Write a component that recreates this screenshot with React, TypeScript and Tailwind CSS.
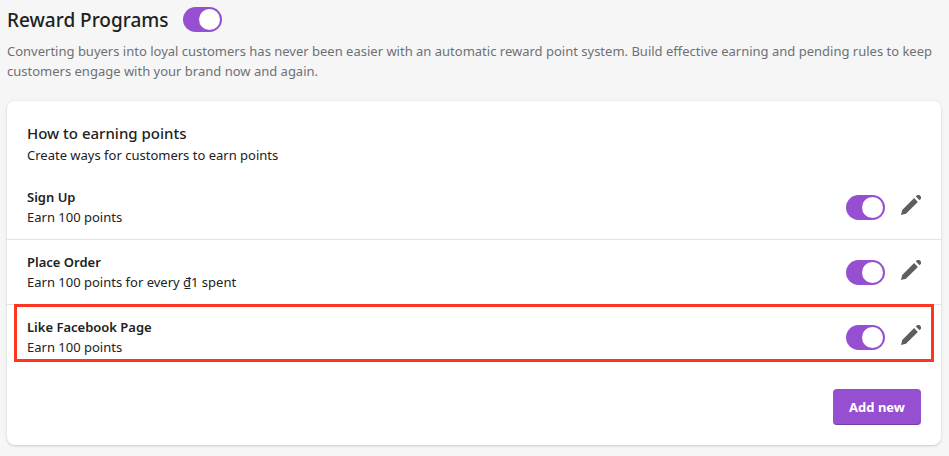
import { useState } from 'react';

type Program = {
  id: string;
  title: string;
  description: string;
  highlighted?: boolean;
};

const programs: Program[] = [
  { id: 'sign-up', title: 'Sign Up', description: 'Earn 100 points' },
  { id: 'place-order', title: 'Place Order', description: 'Earn 100 points for every ₫1 spent' },
  { id: 'like-facebook', title: 'Like Facebook Page', description: 'Earn 100 points', highlighted: true },
];

function Toggle({ label }: { label: string }) {
  const [checked, setChecked] = useState(true);

  return (
    <label className="relative block h-[25px] w-[39px] shrink-0 cursor-pointer">
      <input
        type="checkbox"
        role="switch"
        aria-label={label}
        checked={checked}
        onChange={(e) => setChecked(e.target.checked)}
        className="peer block h-full w-full cursor-pointer appearance-none rounded-full bg-gray-400 checked:bg-[#964fd1]"
      />
      <span className="pointer-events-none absolute top-[2px] left-[2px] size-[21px] rounded-full bg-white transition-transform peer-checked:translate-x-[14px]" />
    </label>
  );
}

function PencilIcon() {
  return (
    <svg viewBox="0 0 20 20" className="block size-5 fill-[#5c5f62]" aria-hidden="true">
      <path d="M14.846 1.403l3.752 3.753.625-.626A2.653 2.653 0 0015.471.778l-.625.625zm2.029 5.472l-3.752-3.753L1.218 15.028 0 19.998l4.97-1.217L16.875 6.875z" />
    </svg>
  );
}

function ProgramRow({ program }: { program: Program }) {
  return (
    <li className="relative flex items-start justify-between border-b border-[#e1e3e5] px-5 py-3 last:border-b-0">
      <div>
        <h3 className="text-[13px] leading-5 font-semibold">{program.title}</h3>
        <p className="text-[13px] leading-5">{program.description}</p>
      </div>
      <div className="flex items-start gap-4 pt-2">
        <Toggle label={program.title} />
        <button type="button" aria-label={`Edit ${program.title}`} className="cursor-pointer">
          <PencilIcon />
        </button>
      </div>
      {program.highlighted && (
        <div className="pointer-events-none absolute inset-x-[7px] -top-px bottom-[7px] border-3 border-[#fc3621]" />
      )}
    </li>
  );
}

export default function App() {
  return (
    <main className="min-h-screen bg-[#f6f6f6] py-[7px] pr-2 pl-[7px] font-['Noto_Sans','Open_Sans',sans-serif] text-[#202223]">
      <header>
        <div className="flex items-center gap-3.5">
          <h1 className="text-[19px] leading-6 font-medium">Reward Programs</h1>
          <Toggle label="Reward Programs" />
        </div>
        <p className="mt-[9px] text-[13px] leading-5 text-[#6d7175]">
          Converting buyers into loyal customers has never been easier with an automatic reward point system. Build
          effective earning and pending rules to keep customers engage with your brand now and again.
        </p>
      </header>

      <section className="mt-5 rounded-lg bg-white py-5 shadow-[0_0_5px_rgba(23,24,24,0.05),0_1px_2px_rgba(0,0,0,0.15)]">
        <div className="px-5 pb-[10px]">
          <h2 className="text-[15px] leading-6 font-medium">How to earning points</h2>
          <p className="text-[13px] leading-5">Create ways for customers to earn points</p>
        </div>

        <ul>
          {programs.map((program) => (
            <ProgramRow key={program.id} program={program} />
          ))}
        </ul>

        <div className="mt-5 flex justify-end px-5">
          <button
            type="button"
            className="h-9 cursor-pointer rounded bg-[#964fd1] px-4 text-[13px] leading-4 font-bold text-white shadow-[inset_0_-1px_0_rgba(0,0,0,0.2)]"
          >
            Add new
          </button>
        </div>
      </section>
    </main>
  );
}
